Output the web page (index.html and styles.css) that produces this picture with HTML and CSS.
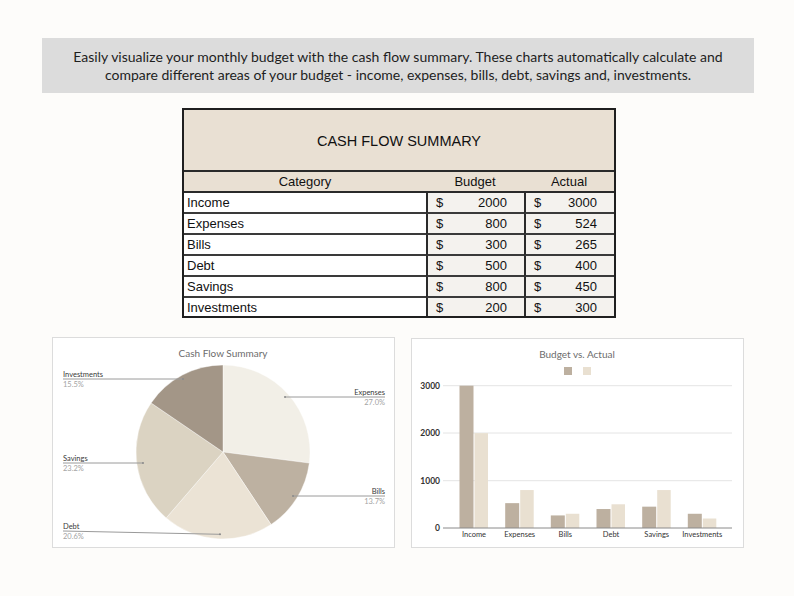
FILE: index.html
```html
<!DOCTYPE html>
<html lang="en">
<head>
<meta charset="utf-8">
<title>Cash Flow Summary</title>
<link rel="stylesheet" href="styles.css">
</head>
<body>
<div class="page">
  <div class="banner">
    <p>Easily visualize your monthly budget with the cash flow summary. These charts automatically calculate and compare different areas of your budget - income, expenses, bills, debt, savings and, investments.</p>
  </div>

  <div class="summary">
    <div class="summary-title">CASH FLOW SUMMARY</div>
    <div class="grid">
      <div class="hcell">Category</div>
      <div class="hcell">Budget</div>
      <div class="hcell">Actual</div>

      <div class="cat">Income</div>
      <div class="money"><span>$</span><span>2000</span></div>
      <div class="money"><span>$</span><span>3000</span></div>

      <div class="cat">Expenses</div>
      <div class="money"><span>$</span><span>800</span></div>
      <div class="money"><span>$</span><span>524</span></div>

      <div class="cat">Bills</div>
      <div class="money"><span>$</span><span>300</span></div>
      <div class="money"><span>$</span><span>265</span></div>

      <div class="cat">Debt</div>
      <div class="money"><span>$</span><span>500</span></div>
      <div class="money"><span>$</span><span>400</span></div>

      <div class="cat">Savings</div>
      <div class="money"><span>$</span><span>800</span></div>
      <div class="money"><span>$</span><span>450</span></div>

      <div class="cat last">Investments</div>
      <div class="money last"><span>$</span><span>200</span></div>
      <div class="money last"><span>$</span><span>300</span></div>
    </div>
  </div>

  <div class="charts">
    <div class="card pie-card">
      <svg class="chart-svg" width="341" height="209" viewBox="1 1 341 209">
        <text class="chart-title" x="171" y="19.5" text-anchor="middle">Cash Flow Summary</text>
        <g class="slices">
          <path fill="#f2efe7" d="M171,115 L171,28 A87,87 0 0 1 257.30,126.06 Z"/>
          <path fill="#bdb1a1" d="M171,115 L257.30,126.06 A87,87 0 0 1 219.03,187.54 Z"/>
          <path fill="#ebe3d5" d="M171,115 L219.03,187.54 A87,87 0 0 1 114.22,180.91 Z"/>
          <path fill="#dbd3c2" d="M171,115 L114.22,180.91 A87,87 0 0 1 99.13,65.98 Z"/>
          <path fill="#a39687" d="M171,115 L99.13,65.98 A87,87 0 0 1 171,28 Z"/>
        </g>
        <g class="leaders">
          <line x1="11" y1="42" x2="131" y2="42"/>
          <line x1="233" y1="60" x2="333" y2="60"/>
          <line x1="11" y1="126" x2="91" y2="126"/>
          <line x1="241" y1="159" x2="333" y2="159"/>
          <line x1="11" y1="194" x2="168" y2="197.3"/>
        </g>
        <g class="dots">
          <circle cx="131" cy="42" r="1"/>
          <circle cx="233" cy="60" r="1"/>
          <circle cx="91" cy="126" r="1"/>
          <circle cx="241" cy="159" r="1"/>
          <circle cx="168" cy="197.3" r="1"/>
        </g>
        <text class="lbl" x="11" y="40">Investments</text>
        <text class="pct" x="11" y="49.5">15.5%</text>
        <text class="lbl" x="333" y="58" text-anchor="end">Expenses</text>
        <text class="pct" x="333" y="67.5" text-anchor="end">27.0%</text>
        <text class="lbl" x="11" y="124">Savings</text>
        <text class="pct" x="11" y="133.5">23.2%</text>
        <text class="lbl" x="333" y="157" text-anchor="end">Bills</text>
        <text class="pct" x="333" y="166.5" text-anchor="end">13.7%</text>
        <text class="lbl" x="11" y="192">Debt</text>
        <text class="pct" x="11" y="201.5">20.6%</text>
      </svg>
    </div>

    <div class="card bar-card">
      <svg class="chart-svg" width="331" height="208" viewBox="1 1 331 208">
        <text class="chart-title" x="166" y="19.5" text-anchor="middle">Budget vs. Actual</text>
        <rect x="153" y="29" width="8" height="8" fill="#bdb0a0"/>
        <rect x="172" y="29" width="8" height="8" fill="#e9e0d1"/>
        <g class="grid-lines">
          <line x1="32" y1="47.7" x2="321" y2="47.7"/>
          <line x1="32" y1="95" x2="321" y2="95"/>
          <line x1="32" y1="142.7" x2="321" y2="142.7"/>
        </g>
        <g class="ylab">
          <text x="29" y="50.5" text-anchor="end">3000</text>
          <text x="29" y="97.8" text-anchor="end">2000</text>
          <text x="29" y="145.5" text-anchor="end">1000</text>
          <text x="29" y="192.8" text-anchor="end">0</text>
        </g>
        <g fill="#bdb0a0">
          <rect x="48.5" y="47.7" width="14" height="142.3"/>
          <rect x="94.2" y="165.15" width="14" height="24.85"/>
          <rect x="139.8" y="177.43" width="14" height="12.57"/>
          <rect x="185.5" y="171.03" width="14" height="18.97"/>
          <rect x="231.2" y="168.66" width="14" height="21.34"/>
          <rect x="276.8" y="175.77" width="14" height="14.23"/>
        </g>
        <g fill="#e9e0d1">
          <rect x="63.5" y="95.13" width="13.5" height="94.87"/>
          <rect x="109.2" y="152.05" width="13.5" height="37.95"/>
          <rect x="154.8" y="175.77" width="13.5" height="14.23"/>
          <rect x="200.5" y="166.28" width="13.5" height="23.72"/>
          <rect x="246.2" y="152.05" width="13.5" height="37.95"/>
          <rect x="291.8" y="180.51" width="13.5" height="9.49"/>
        </g>
        <line class="axis" x1="32" y1="190" x2="321" y2="190"/>
        <g class="xlab">
          <text x="63" y="198.5" text-anchor="middle">Income</text>
          <text x="108.7" y="198.5" text-anchor="middle">Expenses</text>
          <text x="154.3" y="198.5" text-anchor="middle">Bills</text>
          <text x="200" y="198.5" text-anchor="middle">Debt</text>
          <text x="245.7" y="198.5" text-anchor="middle">Savings</text>
          <text x="291.3" y="198.5" text-anchor="middle">Investments</text>
        </g>
      </svg>
    </div>
  </div>
</div>
</body>
</html>
```

FILE: styles.css
```css
html, body {
  margin: 0;
  padding: 0;
  background: #fdfcfa;
}

.page {
  width: 794px;
  height: 596px;
  display: flex;
  flex-direction: column;
  font-family: "Liberation Sans", Arial, sans-serif;
  color: #111;
}

.banner {
  margin: 38px 40px 0 42px;
  height: 55px;
  background: #dcdcdc;
  display: flex;
  align-items: center;
  justify-content: center;
}

.banner p {
  margin: 0;
  width: 680px;
  text-align: center;
  font-family: Lato, "Open Sans", sans-serif;
  font-size: 14px;
  line-height: 18px;
  color: #1e1e1e;
}

.summary {
  margin: 15px 0 0 182px;
  width: 430px;
  border: 2px solid #1f1f1f;
  background: #e9e0d3;
}

.summary-title {
  height: 59px;
  padding-top: 1px;
  border-bottom: 2px solid #2a2a2a;
  display: flex;
  align-items: center;
  justify-content: center;
  font-size: 14.5px;
  color: #111;
}

.grid {
  display: grid;
  grid-template-columns: 242px 98px 90px;
  grid-template-rows: repeat(6, 21px) 18px;
  font-size: 13px;
}

.hcell {
  display: flex;
  align-items: center;
  justify-content: center;
  border-bottom: 2px solid #2a2a2a;
}

.cat {
  background: #ffffff;
  padding-left: 3px;
  display: flex;
  align-items: center;
  border-bottom: 2px solid #3a3a3a;
}

.money {
  background: #f4f2ee;
  border-left: 2px solid #2a2a2a;
  border-bottom: 2px solid #3a3a3a;
  display: flex;
  align-items: center;
  justify-content: space-between;
  padding: 0 17px 0 8px;
}

.grid .last {
  border-bottom: none;
}

.charts {
  display: flex;
  gap: 16px;
  margin: 19px 0 0 52px;
}

.card {
  background: #ffffff;
  border: 1px solid #dcdcdc;
  display: flex;
}

.pie-card {
  width: 341px;
  height: 209px;
}

.bar-card {
  width: 331px;
  height: 208px;
  margin-top: 1px;
}

.chart-svg {
  display: block;
  font-family: Lato, "Open Sans", sans-serif;
}

.chart-title {
  font-size: 10px;
  fill: #6c6c6c;
}

.slices path {
  stroke: #ffffff;
  stroke-width: 0.4;
}

.leaders line {
  stroke: #9a9a9a;
  stroke-width: 1;
}

.dots circle {
  fill: #8a8a8a;
}

.lbl {
  font-size: 7.5px;
  fill: #3a3a3a;
}

.pct {
  font-size: 7.5px;
  fill: #a3a3a3;
}

.grid-lines line {
  stroke: #e4e4e4;
  stroke-width: 1;
}

.axis {
  stroke: #8a8a8a;
  stroke-width: 1;
}

.ylab text {
  font-size: 8.5px;
  font-weight: 700;
  fill: #333333;
}

.xlab text {
  font-size: 7.5px;
  fill: #333333;
}
```
